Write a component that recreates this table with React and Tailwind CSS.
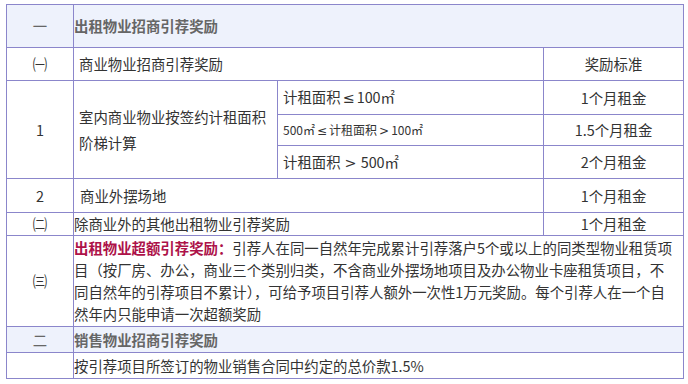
export default function App() {
  // shared cell styles
  const cell = 'border border-[#8b86cb] p-0 align-middle';
  const num = `${cell} text-center`;
  const award = `${cell} text-center`;
  // narrow comparison signs, as in the picture
  const sign = "font-['DejaVu_Sans',sans-serif] px-[2px]";

  return (
    <div className="w-[688px] h-[384px] bg-white pt-[4px] pl-[6px] font-['Noto_Sans_CJK_SC','Microsoft_YaHei',sans-serif] text-[14.4px] leading-[22px] text-[#333]">
      <table className="border-collapse table-fixed w-[677px]">
        <colgroup>
          <col className="w-[67px]" />
          <col className="w-[204px]" />
          <col className="w-[266px]" />
          <col className="w-[140px]" />
        </colgroup>
        <tbody>
          {/* section one header */}
          <tr className="h-[43px] bg-[#eef2fc]">
            <td className={`${num} text-[#666]`}>一</td>
            <td colSpan={3} className={`${cell} font-bold text-[#666]`}>出租物业招商引荐奖励</td>
          </tr>

          <tr className="h-[33px]">
            <td className={num}>㈠</td>
            <td colSpan={2} className={`${cell} pl-[5px]`}>商业物业招商引荐奖励</td>
            <td className={award}>奖励标准</td>
          </tr>

          {/* tiered rows */}
          <tr className="h-[34px]">
            <td rowSpan={3} className={num}>1</td>
            <td rowSpan={3} className={`${cell} pl-[5px] leading-[26px]`}>
              室内商业物业按签约计租面积<br />阶梯计算
            </td>
            <td className={`${cell} pl-[5px]`}>
              计租面积<span className={`${sign} px-0`}>≤</span>100㎡
            </td>
            <td className={award}>1个月租金</td>
          </tr>
          <tr className="h-[31px]">
            <td className={`${cell} pl-[5px] text-[12px]`}>
              500㎡<span className={sign}>≤</span>计租面积<span className={sign}>&gt;</span>100㎡
            </td>
            <td className={award}>1.5个月租金</td>
          </tr>
          <tr className="h-[33px]">
            <td className={`${cell} pl-[5px]`}>
              计租面积<span className={`${sign} px-[4px]`}>&gt;</span>500㎡
            </td>
            <td className={award}>2个月租金</td>
          </tr>

          <tr className="h-[34px]">
            <td className={num}>2</td>
            <td colSpan={2} className={`${cell} pl-[6px]`}>商业外摆场地</td>
            <td className={award}>1个月租金</td>
          </tr>

          <tr className="h-[23px]">
            <td className={num}>㈡</td>
            <td colSpan={2} className={cell}>除商业外的其他出租物业引荐奖励</td>
            <td className={award}>1个月租金</td>
          </tr>

          {/* excess reward paragraph */}
          <tr className="h-[91px]">
            <td className={num}>㈢</td>
            <td colSpan={3} className={`${cell} whitespace-nowrap`}>
              <span className="font-bold text-[#ad1249]">出租物业超额引荐奖励：</span>
              引荐人在同一自然年完成累计引荐落户5个或以上的同类型物业租赁项<br />
              目（按厂房、办公，商业三个类别归类，不含商业外摆场地项目及办公物业卡座租赁项目，不<br />
              同自然年的引荐项目不累计），可给予项目引荐人额外一次性1万元奖励。每个引荐人在一个自<br />
              然年内只能申请一次超额奖励
            </td>
          </tr>

          {/* section two */}
          <tr className="h-[26px] bg-[#eef2fc]">
            <td className={`${num} text-[#666]`}>二</td>
            <td colSpan={3} className={`${cell} font-bold text-[#666]`}>销售物业招商引荐奖励</td>
          </tr>
          <tr className="h-[26px]">
            <td className={num}></td>
            <td colSpan={3} className={cell}>按引荐项目所签订的物业销售合同中约定的总价款1.5%</td>
          </tr>
        </tbody>
      </table>
    </div>
  );
}
